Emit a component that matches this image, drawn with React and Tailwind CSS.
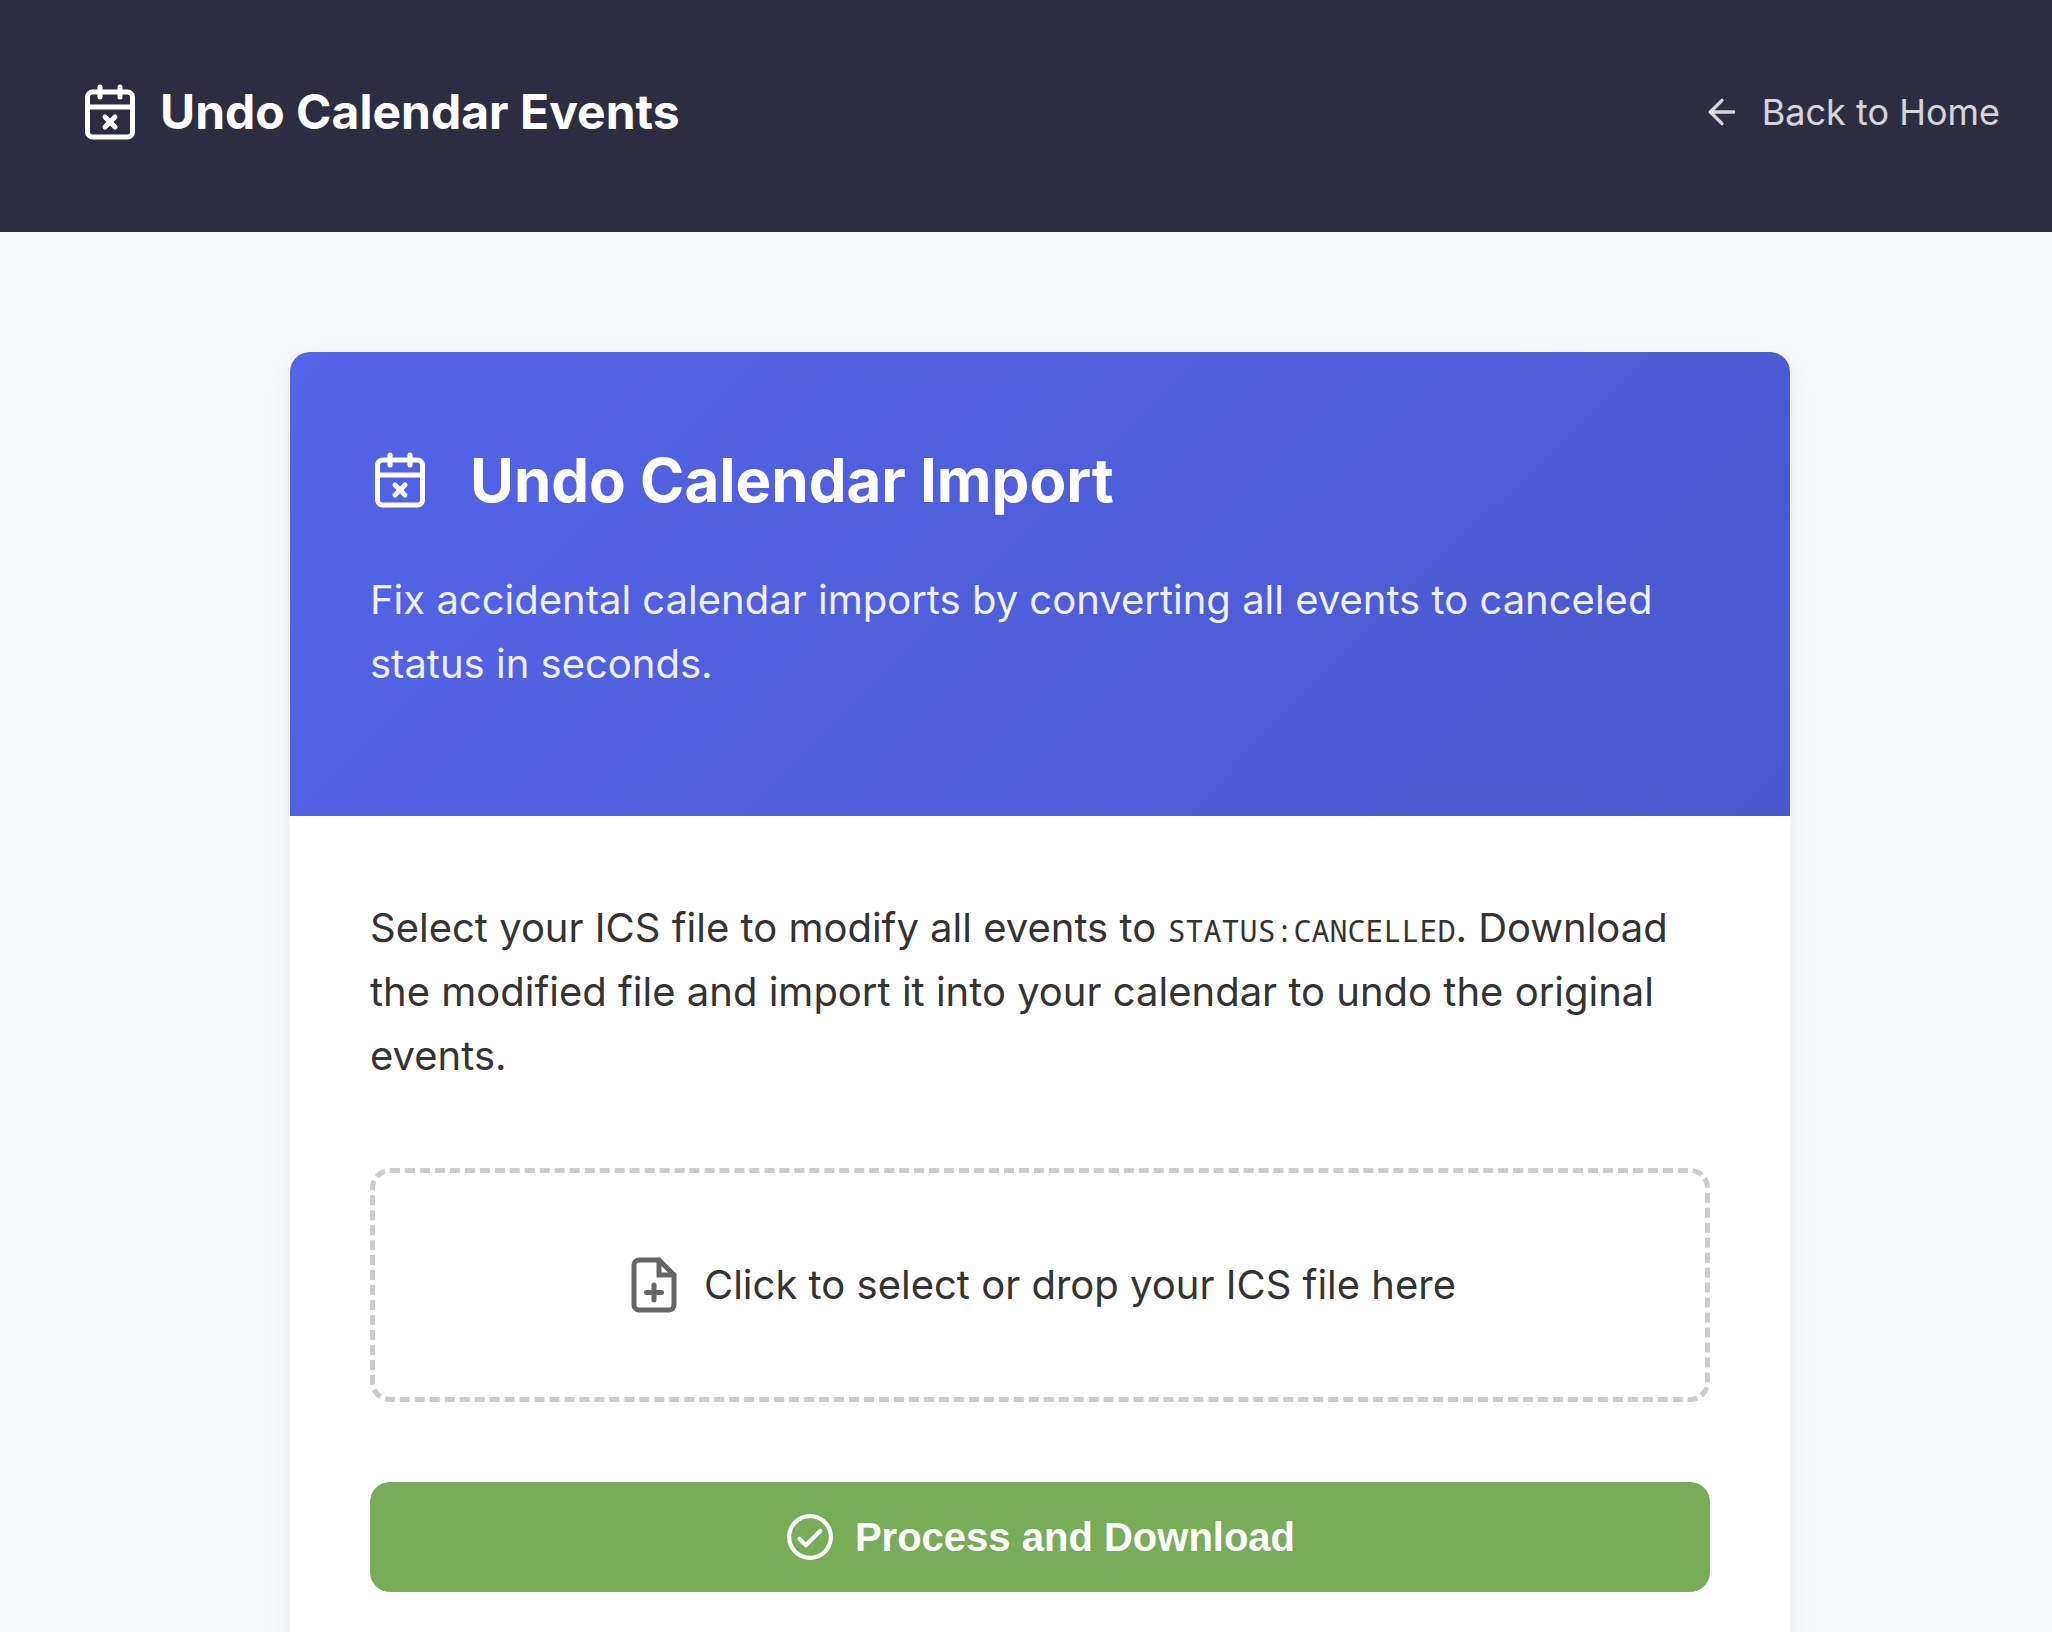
import React from "react";
import { ArrowLeft, CalendarX } from "lucide-react";

const FilePlusIcon = ({ className }) => (
  <svg
    viewBox="0 0 24 24"
    fill="none"
    stroke="currentColor"
    strokeWidth="2"
    strokeLinecap="round"
    className={className}
    aria-hidden="true"
  >
    <path d="M14 2H6a2 2 0 0 0-2 2v16a2 2 0 0 0 2 2h12a2 2 0 0 0 2-2V8z" strokeLinejoin="round" />
    <path d="M14 2v6h6" />
    <path d="M12 12v6M9 15h6" />
  </svg>
);

const CheckCircleIcon = ({ className }) => (
  <svg
    viewBox="0 0 24 24"
    fill="none"
    stroke="currentColor"
    strokeWidth="2"
    strokeLinecap="round"
    strokeLinejoin="round"
    className={className}
    aria-hidden="true"
  >
    <circle cx="12" cy="12" r="10" />
    <path d="M7 13l3 3 7-7" />
  </svg>
);

const Header = () => {
  return (
    <header className="flex items-center justify-between bg-[#2d2d42] pl-20 pr-13 pt-20 pb-22">
      <div className="flex items-center gap-5 text-white">
        <CalendarX className="size-15" />
        <span className="text-5xl font-bold leading-16">Undo Calendar Events</span>
      </div>
      <a href="#" className="flex items-center gap-5 text-4xl leading-16 text-white/80">
        <ArrowLeft className="size-10" />
        Back to Home
      </a>
    </header>
  );
};

const App = () => {
  return (
    <div className="min-h-screen bg-[#f8f9fb] font-['Inter',sans-serif] text-[40px] leading-16 text-[#333]">
      <Header />

      <main className="pt-30 pl-7">
        <div className="mx-auto max-w-[1500px] overflow-hidden rounded-[20px] bg-white shadow-[0_10px_25px_rgba(0,0,0,0.08)]">
          {/* Card header */}
          <div className="bg-linear-135 from-[#5564e8] to-[#4a58cd] p-20 pb-30 text-white">
            <div className="flex items-center gap-10">
              <CalendarX className="size-15" />
              <h1 className="text-6xl font-bold leading-24">Undo Calendar Import</h1>
            </div>
            <p className="mt-10 opacity-90">
              Fix accidental calendar imports by converting all events to
              canceled status in seconds.
            </p>
          </div>

          {/* Card body */}
          <div className="p-20">
            <p>
              Select your ICS file to modify all events to{" "}
              <code className="font-['Noto_Sans_Mono','DejaVu_Sans_Mono',monospace] text-3xl">STATUS:CANCELLED</code>.
              Download the modified file and import it into your calendar to
              undo the original events.
            </p>

            <label className="mt-20 flex cursor-pointer items-center justify-center gap-5 rounded-[20px] border-5 border-dashed border-[#ccc] py-20">
              <input type="file" accept=".ics" className="sr-only" />
              <FilePlusIcon className="size-15 text-[#666]" />
              Click to select or drop your ICS file here
            </label>

            <button
              type="button"
              className="mt-20 flex w-full items-center justify-center gap-5 rounded-[20px] bg-[#79ac58] py-[30px] font-['Liberation_Sans',sans-serif] font-bold leading-12 text-white"
            >
              <CheckCircleIcon className="size-[50px]" />
              Process and Download
            </button>
          </div>
        </div>
      </main>
    </div>
  );
};

export default App;
